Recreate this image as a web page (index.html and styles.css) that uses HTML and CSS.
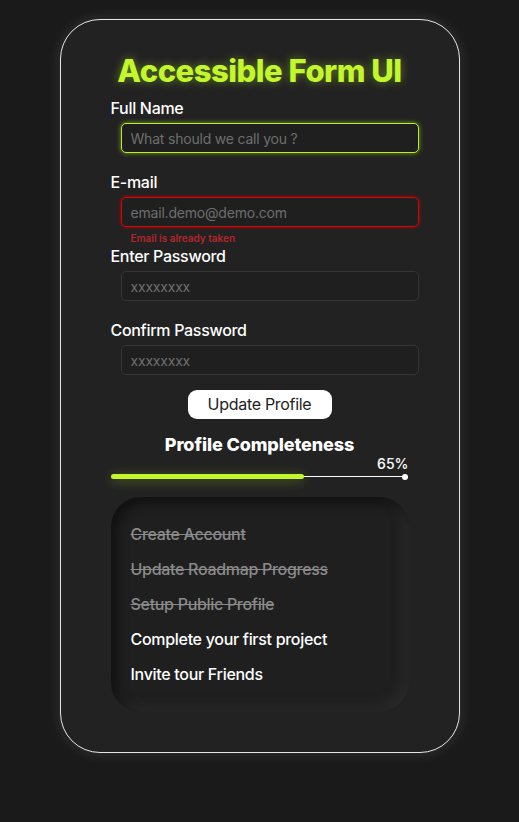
FILE: index.html
```html
<!DOCTYPE html>
<html lang="en">
<head>
<meta charset="utf-8">
<title>Accessible Form UI</title>
<link rel="stylesheet" href="styles.css">
</head>
<body>
<main class="card">
  <h1 class="title">Accessible Form UI</h1>
  <form class="form">
    <div class="field">
      <label class="label" for="name">Full Name</label>
      <input class="input input-focus" id="name" type="text" placeholder="What should we call you ?">
    </div>
    <div class="field">
      <label class="label" for="email">E-mail</label>
      <input class="input input-error" id="email" type="email" placeholder="email.demo@demo.com">
      <span class="error">Email is already taken</span>
    </div>
    <div class="field">
      <label class="label" for="pw">Enter Password</label>
      <input class="input" id="pw" type="text" placeholder="xxxxxxxx">
    </div>
    <div class="field">
      <label class="label" for="pw2">Confirm Password</label>
      <input class="input" id="pw2" type="text" placeholder="xxxxxxxx">
    </div>
    <div class="actions">
      <button class="btn" type="button">Update Profile</button>
    </div>
  </form>
  <section class="progress">
    <h2 class="progress-title">Profile Completeness</h2>
    <div class="progress-pct">65%</div>
    <div class="bar">
      <div class="bar-fill" style="width:65%"></div>
      <div class="bar-dot"></div>
    </div>
  </section>
  <ul class="tasks">
    <li class="task done">Create Account</li>
    <li class="task done">Update Roadmap Progress</li>
    <li class="task done">Setup Public Profile</li>
    <li class="task">Complete your first project</li>
    <li class="task">Invite tour Friends</li>
  </ul>
</main>
</body>
</html>
```
FILE: styles.css
```css
* { box-sizing: border-box; }
html, body { margin: 0; padding: 0; }
body {
  background: #1a1a1a;
  font-family: Inter, "Noto Sans", sans-serif;
  color: #fff;
  min-height: 822px;
  padding-top: 19px;
}
.card {
  width: 400px;
  height: 734px;
  margin: 0 auto;
  background: #222222;
  border: 1px solid #e6e6e6;
  border-radius: 40px;
  box-shadow: 0 0 14px rgba(255,255,255,0.12);
  padding: 32px 50px 0 50px;
  display: flex;
  flex-direction: column;
}
.title {
  margin: 0;
  text-align: center;
  font-size: 31px;
  font-weight: 800;
  letter-spacing: -0.5px;
  color: #c2f72c;
  line-height: 38px;
  text-shadow: 0 0 10px rgba(194,247,44,0.45);
}
.form { display: flex; flex-direction: column; margin-top: 8px; }
.field { display: flex; flex-direction: column; margin-bottom: 19px; }
.label {
  font-size: 16px;
  font-weight: 500;
  letter-spacing: -0.3px;
  line-height: 20px;
  margin-bottom: 5px;
}
.input {
  width: 100%;
  margin-left: 10px;
  height: 30px;
  background: #1f1f1f;
  border: 1px solid #353535;
  border-radius: 5px;
  padding: 0 9px;
  font-family: inherit;
  font-size: 14px;
  letter-spacing: -0.2px;
  color: #ccc;
  outline: none;
}
.input::placeholder { color: #6e6e6e; }
.input-focus {
  border-color: #b8ef2a;
  box-shadow: 0 0 5px rgba(184,239,42,0.6);
}
.input-error {
  border-color: #e20000;
  box-shadow: 0 0 4px rgba(226,0,0,0.6);
}
.error {
  margin-left: 20px;
  margin-top: 5px;
  font-size: 10px;
  font-weight: 600;
  color: #b3262b;
  line-height: 12px;
  margin-bottom: -17px;
}
.actions { display: flex; justify-content: center; margin-top: -4px; }
.btn {
  background: #fff;
  color: #222;
  border: none;
  border-radius: 9px;
  width: 144px;
  height: 29px;
  padding-bottom: 2px;
  font-family: inherit;
  font-size: 16px;
  letter-spacing: -0.3px;
}
.progress { margin-top: 14px; display: flex; flex-direction: column; }
.progress-title {
  margin: 0;
  text-align: center;
  font-size: 18px;
  font-weight: 800;
  letter-spacing: -0.1px;
  line-height: 24px;
}
.progress-pct {
  align-self: flex-end;
  font-size: 14px;
  font-weight: 500;
  line-height: 14px;
  margin-top: 0;
}
.bar {
  position: relative;
  height: 5px;
  margin-top: 3px;
  width: 298px;
  display: flex;
  align-items: center;
}
.bar::before {
  content: "";
  position: absolute;
  left: 0; right: 2px;
  top: 2px;
  height: 1px;
  background: #fff;
}
.bar-fill {
  position: relative;
  height: 5px;
  background: #c2f72c;
  border-radius: 3px;
  box-shadow: 0 2px 12px rgba(194,247,44,0.35);
}
.bar-dot {
  position: absolute;
  right: 1px;
  top: -0.5px;
  width: 6px; height: 6px;
  border-radius: 50%;
  background: #fff;
}
.tasks {
  list-style: none;
  margin: 18px 0 0 0;
  padding: 27px 20px 24px 20px;
  width: 298px;
  height: 215px;
  border-radius: 30px;
  background: #1f1f1f;
  box-shadow: inset 6px 6px 12px rgba(0,0,0,0.45), inset -6px -6px 12px rgba(60,60,60,0.35);
  display: flex;
  flex-direction: column;
  gap: 15px;
}
.task {
  font-size: 16px;
  font-weight: 500;
  letter-spacing: -0.3px;
  line-height: 20px;
}
.task.done {
  color: #8a8a8a;
  text-decoration: line-through;
}
```
